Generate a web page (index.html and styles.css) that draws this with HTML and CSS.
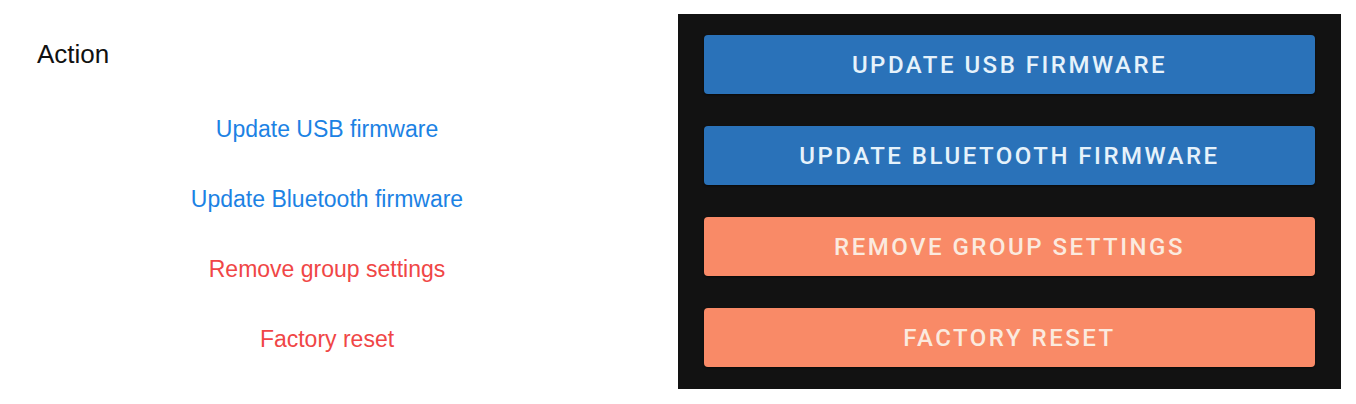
FILE: index.html
```html
<!DOCTYPE html>
<html>
<head>
<meta charset="utf-8">
<link rel="stylesheet" href="styles.css">
</head>
<body>
<div class="page">
  <section class="ios">
    <h1 class="ios-title">Action</h1>
    <ul class="ios-list">
      <li class="ios-item blue">Update USB firmware</li>
      <li class="ios-item blue">Update Bluetooth firmware</li>
      <li class="ios-item red">Remove group settings</li>
      <li class="ios-item red">Factory reset</li>
    </ul>
  </section>
  <section class="android">
    <div class="btn btn-blue">UPDATE USB FIRMWARE</div>
    <div class="btn btn-blue">UPDATE BLUETOOTH FIRMWARE</div>
    <div class="btn btn-orange">REMOVE GROUP SETTINGS</div>
    <div class="btn btn-orange">FACTORY RESET</div>
  </section>
</div>
</body>
</html>
```
FILE: styles.css
```css
html, body {
  margin: 0;
  padding: 0;
  background: #ffffff;
}
.page {
  display: flex;
  align-items: flex-start;
  width: 1356px;
  height: 404px;
}
.ios {
  width: 654px;
  margin-right: 24px;
  font-family: "Liberation Sans", Arial, sans-serif;
}
.ios-title {
  margin: 0;
  padding: 39px 0 0 37px;
  font-size: 26px;
  font-weight: normal;
  line-height: 30px;
  color: #111111;
}
.ios-list {
  list-style: none;
  margin: 25px 0 0 0;
  padding: 0;
}
.ios-item {
  height: 70px;
  line-height: 70px;
  text-align: center;
  font-size: 23px;
}
.ios-item.wide {
  letter-spacing: 0.1px;
}
.blue { color: #1c82e4; }
.red { color: #f04646; }
.android {
  width: 663px;
  height: 375px;
  margin-top: 14px;
  box-sizing: border-box;
  padding: 21px 26px 0 26px;
  background: #121212;
  display: flex;
  flex-direction: column;
  gap: 32px;
}
.btn {
  height: 59px;
  border-radius: 4px;
  display: flex;
  align-items: center;
  justify-content: center;
  font-family: Roboto, "Liberation Sans", sans-serif;
  font-weight: 500;
  font-size: 24px;
  letter-spacing: 2.5px;
  box-shadow: 0 1px 2px rgba(0,0,0,0.5);
}
.btn-blue {
  background: #2a72b9;
  color: #e6f2fb;
}
.btn-orange {
  background: #f98a67;
  color: #fbeadf;
}
```
